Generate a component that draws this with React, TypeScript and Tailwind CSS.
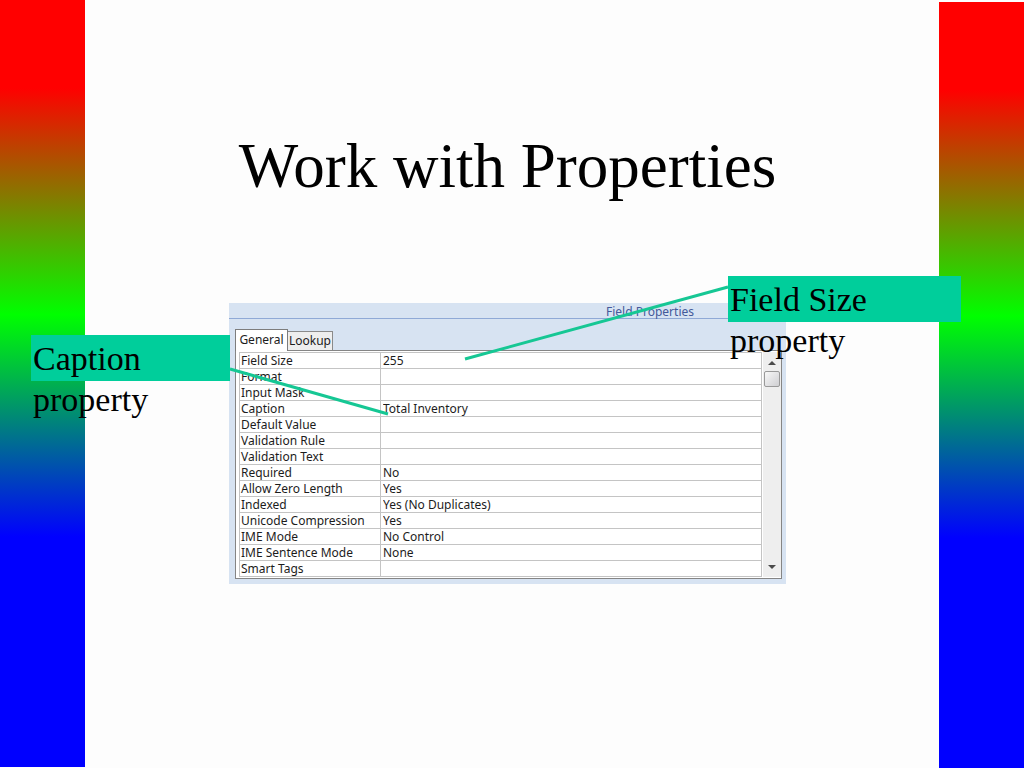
const properties = [
  { name: 'Field Size', value: '255' },
  { name: 'Format', value: '' },
  { name: 'Input Mask', value: '' },
  { name: 'Caption', value: 'Total Inventory' },
  { name: 'Default Value', value: '' },
  { name: 'Validation Rule', value: '' },
  { name: 'Validation Text', value: '' },
  { name: 'Required', value: 'No' },
  { name: 'Allow Zero Length', value: 'Yes' },
  { name: 'Indexed', value: 'Yes (No Duplicates)' },
  { name: 'Unicode Compression', value: 'Yes' },
  { name: 'IME Mode', value: 'No Control' },
  { name: 'IME Sentence Mode', value: 'None' },
  { name: 'Smart Tags', value: '' },
];

function PropertyTable() {
  return (
    <table className="flex-1 table-fixed border-separate border-spacing-0 border-l border-t border-[#c4c4c4] text-left">
      <colgroup>
        <col className="w-[141px]" />
        <col />
      </colgroup>
      <tbody>
        {properties.map((p, i) => (
          <tr key={p.name} className="h-4">
            <th
              scope="row"
              className="h-4 border-b border-r border-[#c4c4c4] p-0 pl-px font-normal"
            >
              <label htmlFor={`property-${i}`} className="block h-[15px] leading-[16px]">
                {p.name}
              </label>
            </th>
            <td className="h-4 border-b border-r border-[#c4c4c4] p-0 pl-0.5">
              <input
                id={`property-${i}`}
                type="text"
                defaultValue={p.value}
                className="block h-[15px] w-full bg-transparent p-0 leading-[16px] outline-none"
              />
            </td>
          </tr>
        ))}
      </tbody>
    </table>
  );
}

function ScrollBar() {
  return (
    <div className="flex w-[18px] flex-col items-center bg-[#eeeeee] pr-px">
      <button type="button" aria-label="Scroll up" className="flex h-[19px] w-4 items-center justify-center pt-0.5">
        <svg width="8" height="4" viewBox="0 0 8 4" aria-hidden="true">
          <path d="M4 0 8 4H0Z" fill="#4a4a4a" />
        </svg>
      </button>
      <div className="h-4 w-4 rounded-xs border border-[#999999] bg-linear-to-br from-[#f8f8f8] to-[#cfcfd2]" />
      <button type="button" aria-label="Scroll down" className="mt-auto flex h-5 w-4 items-center justify-center">
        <svg width="8" height="4" viewBox="0 0 8 4" aria-hidden="true">
          <path d="M0 0H8L4 4Z" fill="#4a4a4a" />
        </svg>
      </button>
    </div>
  );
}

function FieldProperties() {
  return (
    <section className="bg-[#d7e3f2] pb-[5px] font-['Noto_Sans','Open_Sans',sans-serif] text-[12px] text-[#1c1c1c]">
      <h2 className="h-4 border-b border-[#8fa9d6] pr-[92px] text-right leading-[17px] font-normal text-[#43599a]">
        Field Properties
      </h2>
      <div role="tablist" className="flex items-end pt-[10px] pl-1.5">
        <button
          type="button"
          role="tab"
          aria-selected="true"
          className="relative z-10 -mb-px h-[22px] w-[53px] border border-b-0 border-[#7d7d7d] bg-white pb-0.5 leading-[18px]"
        >
          General
        </button>
        <button
          type="button"
          role="tab"
          aria-selected="false"
          className="h-[19px] w-[45px] border border-b-0 border-l-0 border-[#8a8a8a] bg-[#eeeeee] leading-[18px]"
        >
          Lookup
        </button>
      </div>
      <div className="mr-1 ml-1.5 flex gap-px border border-[#858585] bg-white pt-px pb-px pl-[3px]">
        <PropertyTable />
        <ScrollBar />
      </div>
    </section>
  );
}

export default function App() {
  return (
    <div className="flex min-h-screen bg-[#fdfdfd] text-black">
      <div className="mb-px w-[85px] shrink-0 bg-[linear-gradient(to_bottom,#ff0000_11.5%,#00ff00_41%,#0000ff_70%)]" />
      <main className="flex flex-1 flex-col items-center pr-[9px]">
        <h1 className="mt-[130px] font-['Liberation_Serif',serif] text-[63px] leading-[72px] whitespace-nowrap">
          Work with Properties
        </h1>
        <figure className="relative mt-[101px] w-[557px]">
          <FieldProperties />
          <svg
            className="pointer-events-none absolute inset-0 z-20 size-full overflow-visible"
            stroke="#16c794"
            strokeWidth="3"
            aria-hidden="true"
          >
            <path d="M1 66 159 111M499 -16 236 56" fill="none" />
          </svg>
          <p className="absolute top-8 -left-[198px] z-20 h-[46px] w-[199px] bg-[#00ce9b] px-0.5 pt-[3px] font-['Liberation_Serif',serif] text-[34px] leading-[41px]">
            Caption
            <br />
            property
          </p>
          <p className="absolute -top-[27px] left-[499px] z-20 h-[46px] w-[233px] bg-[#00ce9b] px-0.5 pt-[3px] font-['Liberation_Serif',serif] text-[34px] leading-[41px]">
            Field Size
            <br />
            property
          </p>
        </figure>
      </main>
      <div className="mt-0.5 w-[85px] shrink-0 bg-[linear-gradient(to_bottom,#ff0000_11.5%,#00ff00_41%,#0000ff_70%)]" />
    </div>
  );
}
